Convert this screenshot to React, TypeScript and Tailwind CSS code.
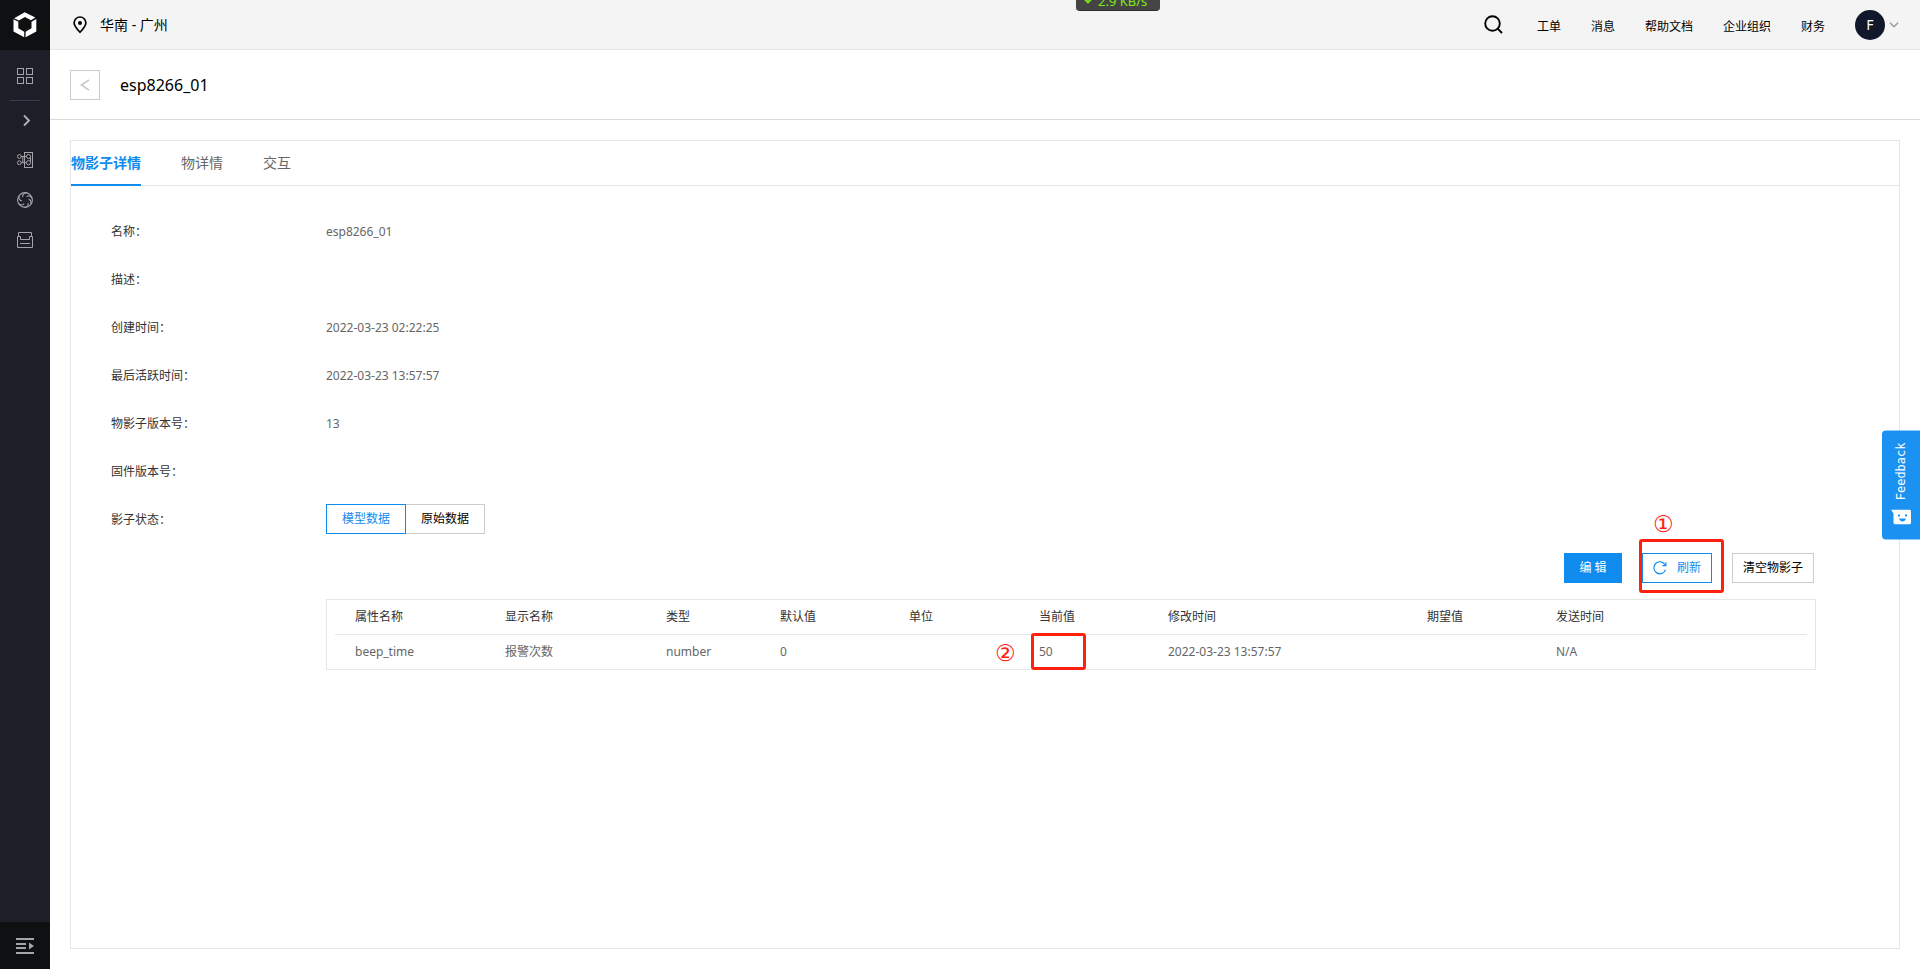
import React from "react";

const fields = [
  { label: "名称：", value: "esp8266_01" },
  { label: "描述：", value: "" },
  { label: "创建时间：", value: "2022-03-23 02:22:25" },
  { label: "最后活跃时间：", value: "2022-03-23 13:57:57" },
  { label: "物影子版本号：", value: "13" },
  { label: "固件版本号：", value: "" },
];

const columns = [
  { title: "属性名称", value: "beep_time", width: "w-[150px]" },
  { title: "显示名称", value: "报警次数", width: "w-[161px]" },
  { title: "类型", value: "number", width: "w-[114px]" },
  { title: "默认值", value: "0", width: "w-[129px]" },
  { title: "单位", value: "", width: "w-[130px]" },
  { title: "当前值", value: "50", width: "w-[129px]", marked: true },
  { title: "修改时间", value: "2022-03-23 13:57:57", width: "w-[259px]" },
  { title: "期望值", value: "", width: "w-[129px]" },
  { title: "发送时间", value: "N/A", width: "" },
];

function LogoIcon() {
  return (
    <svg width="24" height="26" viewBox="0 0 24 26" fill="#fff" aria-hidden="true">
      <path d="M11.7 0.3 L22.3 5.6 L18 8.2 L12 5 L5.8 8.4 L1.2 6.2 Z" />
      <path d="M0.5 7.3 L5.3 9.7 V16.3 L11.2 19.8 V25.2 L0.5 19.4 Z" />
      <path d="M23.3 7 V19.4 L12.6 25.2 V19.8 L18.5 16.3 V9.7 Z" />
    </svg>
  );
}

function GridIcon() {
  return (
    <svg width="16" height="16" viewBox="0 0 16 16" fill="none" stroke="#a3a3a8" aria-hidden="true">
      <rect x="0.5" y="0.5" width="6" height="6" />
      <rect x="9.5" y="0.5" width="6" height="6" />
      <rect x="0.5" y="9.5" width="6" height="6" />
      <rect x="9.5" y="9.5" width="6" height="6" />
    </svg>
  );
}

function ChevronIcon() {
  return (
    <svg width="16" height="16" viewBox="0 0 16 16" fill="none" stroke="#b5b5b8" strokeWidth="1.8" aria-hidden="true">
      <path d="M7 3.5 L12 8.5 L7 13.5" />
    </svg>
  );
}

function DevicesIcon() {
  return (
    <svg width="16" height="16" viewBox="0 0 16 16" fill="none" stroke="#a3a3a8" aria-hidden="true">
      <rect x="7.5" y="0.5" width="8" height="15" />
      <circle cx="2.3" cy="4.5" r="1.9" />
      <circle cx="2.3" cy="10.7" r="1.9" />
      <circle cx="11.5" cy="4.5" r="2.1" />
      <circle cx="11.5" cy="10.7" r="2.1" />
      <path d="M4.2 4.5 H9.4 M4.2 10.7 H9.4 M5.8 4.5 V10.7 M13.5 5.5 V9.7" />
    </svg>
  );
}

function ApertureIcon() {
  return (
    <svg width="16" height="16" viewBox="0 0 16 16" fill="none" stroke="#a3a3a8" strokeWidth="1.1" aria-hidden="true">
      <circle cx="8" cy="8" r="7.4" />
      <path d="M9.8 0.8 Q4.8 1.4 5.8 5.2 M15.2 6.2 Q12.2 2.2 9.6 4.8 M13.6 12.8 Q15 8 11.6 7.4 M7.6 15.4 Q12 14.8 11 11 M1.4 11.4 Q4.6 14.4 7.2 11.6 M2 3.8 Q1.6 8.6 5 8.8" />
    </svg>
  );
}

function ArchiveIcon() {
  return (
    <svg width="16" height="16" viewBox="0 0 16 16" fill="none" stroke="#a3a3a8" aria-hidden="true">
      <path d="M1.5 4.5 V0.5 H14.5 V4.5 M0.5 4.5 H3.5 V7.5 H12.5 V4.5 H15.5 V15.5 H0.5 Z M3 11.5 H13" />
    </svg>
  );
}

function MenuIcon() {
  return (
    <svg width="18" height="16" viewBox="0 0 18 16" aria-hidden="true">
      <g fill="#a5a6a8">
        <rect x="0" y="0" width="18" height="2" />
        <rect x="0" y="5" width="10" height="2" />
        <rect x="0" y="9" width="10" height="2" />
        <rect x="0" y="14" width="18" height="2" />
        <path d="M13 4.5 L18 8 L13 11.5 Z" />
      </g>
    </svg>
  );
}

const railButton = "flex h-10 w-full items-center justify-center";

function Sidebar() {
  return (
    <aside className="flex w-[50px] shrink-0 flex-col bg-[#1e1e28]">
      <a href="#home" aria-label="首页" className="flex h-[50px] items-center justify-center bg-[#0f1011]">
        <LogoIcon />
      </a>
      <nav className="flex flex-1 flex-col pt-[6px]" aria-label="主导航">
        <button type="button" aria-label="全部服务" className={railButton}>
          <GridIcon />
        </button>
        <div className="mx-[10px] mt-1 -mb-px border-t border-[#3c3c4c]" />
        <button type="button" aria-label="展开" className={railButton}>
          <ChevronIcon />
        </button>
        <button type="button" aria-label="设备" className={railButton}>
          <DevicesIcon />
        </button>
        <button type="button" aria-label="监控" className={railButton}>
          <ApertureIcon />
        </button>
        <button type="button" aria-label="存储" className={railButton}>
          <ArchiveIcon />
        </button>
      </nav>
      <button type="button" aria-label="展开菜单" className="flex h-[47px] items-center justify-center bg-[#0f1011]">
        <MenuIcon />
      </button>
    </aside>
  );
}

function Header() {
  return (
    <header className="flex h-[50px] items-center border-b border-[#e6e6e6] bg-[#f4f4f4] pr-[21px] pl-[23px] text-black">
      <svg width="14" height="18" viewBox="0 0 14 18" fill="none" stroke="#000" strokeWidth="1.7" aria-hidden="true">
        <path d="M7 16.3 C4 13 1.1 9.8 1.1 6.9 A5.9 5.9 0 0 1 12.9 6.9 C12.9 9.8 10 13 7 16.3 Z" />
        <circle cx="7" cy="7" r="2" fill="#000" stroke="none" />
      </svg>
      <span className="ml-[13px] text-sm">华南 - 广州</span>
      <div className="ml-auto flex items-center">
        <button type="button" aria-label="搜索">
          <svg width="19" height="19" viewBox="0 0 19 19" fill="none" stroke="#000" strokeWidth="1.9" aria-hidden="true">
            <circle cx="8.5" cy="8.5" r="7.3" />
            <path d="M13.6 13.6 L18 18" />
          </svg>
        </button>
        <nav className="ml-[34px] flex gap-[30px] pt-1 text-xs" aria-label="快捷入口">
          <a href="#ticket">工单</a>
          <a href="#message">消息</a>
          <a href="#docs">帮助文档</a>
          <a href="#org">企业组织</a>
          <a href="#finance">财务</a>
        </nav>
        <button type="button" aria-label="账户" className="ml-[30px] flex items-center gap-1">
          <span className="flex size-[30px] items-center justify-center rounded-full bg-[#12182b] text-sm text-white">F</span>
          <svg width="10" height="6" viewBox="0 0 10 6" fill="none" stroke="#999" strokeWidth="1.4" aria-hidden="true">
            <path d="M1 0.8 L5 4.8 L9 0.8" />
          </svg>
        </button>
      </div>
    </header>
  );
}

function SpeedBadge() {
  return (
    <div className="absolute top-0 left-[1076px] flex h-[11px] w-[84px] items-end gap-[6px] overflow-hidden rounded-b-sm border-b border-[#2e2e2e] bg-[#444] pl-2 text-[13px] leading-[18px] text-[#7fe817]">
      <svg width="8" height="12" viewBox="0 0 8 12" fill="none" stroke="#7fe817" strokeWidth="1.5" className="mb-[6px] shrink-0" aria-hidden="true">
        <path d="M4 0 V10.5 M0.7 7.4 L4 10.7 L7.3 7.4" />
      </svg>
      <span className="whitespace-nowrap">2.9 KB/s</span>
    </div>
  );
}

function Feedback() {
  return (
    <button
      type="button"
      className="absolute top-1/2 right-0 flex h-[109px] w-[38px] -translate-y-1/2 flex-col items-center justify-between rounded-l-sm bg-[#1b91f1] pt-3 pb-[15px] text-white"
    >
      <span className="rotate-180 font-['DejaVu_Sans_Mono',monospace] text-xs leading-4 [writing-mode:vertical-rl]">
        Feedback
      </span>
      <svg width="20" height="15" viewBox="0 0 20 15" aria-hidden="true">
        <path d="M0 0 H18 Q20 0 20 2 V13 Q20 15 18 15 H4.5 Q2.5 15 2.5 13 V4 Z" fill="#fff" />
        <rect x="7" y="5" width="2" height="2" fill="#1b91f1" />
        <rect x="14" y="5" width="2" height="2" fill="#1b91f1" />
        <path d="M8 9 H15 Q14 12 11.5 12 Q9 12 8 9 Z" fill="#1b91f1" />
      </svg>
    </button>
  );
}

function Marker({ digit, className }: { digit: string; className: string }) {
  return (
    <span
      className={
        "absolute font-['DejaVu_Sans',sans-serif] text-[23px] leading-5 text-[#ff2010] " +
        className
      }
    >
      {digit}
    </span>
  );
}

function Actions() {
  return (
    <div className="mt-[19px] mr-[2px] flex justify-end gap-5 text-xs">
      <button type="button" className="h-[30px] w-[58px] bg-[#108cee] text-white">
        编 辑
      </button>
      <div className="relative">
        <button type="button" className="flex h-[30px] w-[70px] items-center justify-center gap-[10px] border border-[#108cee] text-[#108cee]">
          <svg width="14" height="14" viewBox="0 0 14 14" fill="none" stroke="#108cee" strokeWidth="1.2" aria-hidden="true">
            <path d="M12.6 8.6 A6 6 0 1 1 12 3.6" />
            <path d="M12.9 1.2 V4.6 H9.4" />
          </svg>
          刷新
        </button>
        <div className="pointer-events-none absolute -top-[14px] -left-[3px] h-[54px] w-[85px] rounded-[3px] border-3 border-[#ff2010]" />
        <Marker digit="①" className="-top-[39px] left-[11px]" />
      </div>
      <button type="button" className="h-[30px] w-[82px] border border-[#ccc] text-black">
        清空物影子
      </button>
    </div>
  );
}

function PropertyTable() {
  return (
    <div className="mt-4 border border-[#e6e6e6] px-2">
      <table className="w-full table-fixed text-left text-xs">
        <thead>
          <tr className="h-[34px] border-b border-[#e6e6e6] text-[#333]">
            {columns.map((c) => (
              <th key={c.title} scope="col" className={"pl-5 font-normal " + c.width}>
                {c.title}
              </th>
            ))}
          </tr>
        </thead>
        <tbody>
          <tr className="h-[35px] text-[#666]">
            {columns.map((c) => (
              <td key={c.title} className="pl-5">
                {c.marked ? (
                  <div className="relative">
                    {c.value}
                    <div className="pointer-events-none absolute -top-[11px] -left-2 h-[37px] w-[55px] rounded-[3px] border-3 border-[#ff2010]" />
                    <Marker digit="②" className="-top-[1px] -left-11" />
                  </div>
                ) : (
                  c.value
                )}
              </td>
            ))}
          </tr>
        </tbody>
      </table>
    </div>
  );
}

export default function App() {
  return (
    <div className="relative flex min-h-screen bg-white font-['Noto_Sans','Noto_Sans_CJK_SC',sans-serif]">
      <Sidebar />
      <div className="flex min-w-0 flex-1 flex-col">
        <Header />
        <div className="flex h-[70px] items-center gap-5 border-b border-[#d9d9d9] px-5">
          <button type="button" aria-label="返回" className="flex size-[30px] items-center justify-center border border-[#ccc]">
            <svg width="10" height="12" viewBox="0 0 10 12" fill="none" stroke="#c8c8c8" strokeWidth="1.6" aria-hidden="true">
              <path d="M9 0.8 L1.5 6 L9 11.2" />
            </svg>
          </button>
          <h1 className="text-base text-black">esp8266_01</h1>
        </div>
        <main className="m-5 flex-1 border border-[#e6e6e6]">
          <div role="tablist" className="flex h-[45px] gap-10 border-b border-[#e6e6e6] text-sm text-[#666]">
            <button type="button" role="tab" aria-selected="true" className="-mb-px h-[45px] border-b-2 border-[#108cee] font-bold text-[#108cee]">
              物影子详情
            </button>
            <button type="button" role="tab" aria-selected="false">
              物详情
            </button>
            <button type="button" role="tab" aria-selected="false">
              交互
            </button>
          </div>
          <div className="pt-[22px] pr-[83px] pl-10 text-xs">
            <dl>
              {fields.map((f) => (
                <div key={f.label} className="flex h-12 items-center">
                  <dt className="w-[215px] text-[#333]">{f.label}</dt>
                  <dd className="text-[#666]">{f.value}</dd>
                </div>
              ))}
            </dl>
            <div className="flex">
              <div className="flex h-12 w-[215px] shrink-0 items-center text-[#333]">影子状态：</div>
              <div className="min-w-0 flex-1 pt-2">
                <div className="flex">
                  <button type="button" className="h-[30px] w-20 border border-[#108cee] text-[#108cee]">
                    模型数据
                  </button>
                  <button type="button" className="h-[30px] w-[79px] border border-l-0 border-[#ccc] text-black">
                    原始数据
                  </button>
                </div>
                <Actions />
                <PropertyTable />
              </div>
            </div>
          </div>
        </main>
      </div>
      <SpeedBadge />
      <Feedback />
    </div>
  );
}
